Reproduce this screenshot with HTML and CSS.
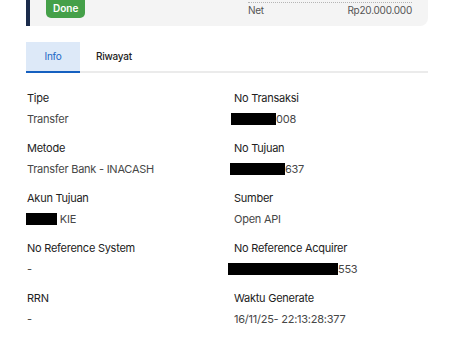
FILE: index.html
```html
<!DOCTYPE html>
<html lang="id">
<head>
    <meta charset="UTF-8">
    <meta name="viewport" content="width=device-width, initial-scale=1.0">
    <title>Detail Transaksi</title>
    <link rel="stylesheet" href="styles.css">
</head>
<body>
    <div class="page">
        <div class="summary-card">
            <span class="badge">Done</span>
            <div class="net-row">
                <span>Net</span>
                <span>Rp20.000.000</span>
            </div>
        </div>

        <div class="tabs">
            <div class="tab active">Info</div>
            <div class="tab">Riwayat</div>
        </div>

        <div class="info-grid">
            <div class="item">
                <div class="label">Tipe</div>
                <div class="value">Transfer</div>
            </div>
            <div class="item right">
                <div class="label">No Transaksi</div>
                <div class="value"><span class="mask mask-trx"></span>008</div>
            </div>
            <div class="item">
                <div class="label">Metode</div>
                <div class="value">Transfer Bank - INACASH</div>
            </div>
            <div class="item right">
                <div class="label">No Tujuan</div>
                <div class="value"><span class="mask mask-dest"></span>637</div>
            </div>
            <div class="item">
                <div class="label">Akun Tujuan</div>
                <div class="value"><span class="mask mask-acc"></span> KIE</div>
            </div>
            <div class="item right">
                <div class="label">Sumber</div>
                <div class="value">Open API</div>
            </div>
            <div class="item">
                <div class="label">No Reference System</div>
                <div class="value">-</div>
            </div>
            <div class="item right">
                <div class="label">No Reference Acquirer</div>
                <div class="value"><span class="mask mask-ref"></span>553</div>
            </div>
            <div class="item">
                <div class="label">RRN</div>
                <div class="value">-</div>
            </div>
            <div class="item right">
                <div class="label">Waktu Generate</div>
                <div class="value">16/11/25- 22:13:28:377</div>
            </div>
        </div>
    </div>
</body>
</html>
```

FILE: styles.css
```css
body {
    margin: 0;
    font-family: "Inter", "Noto Sans", sans-serif;
    background: #fff;
    color: #222;
    letter-spacing: -0.25px;
}
.page {
    padding: 0 26px;
}
.summary-card {
    display: flex;
    justify-content: space-between;
    align-items: flex-end;
    margin-top: -4px;
    padding: 0 16px 8px 16px;
    background: #f4f4f4;
    border-left: 4px solid #1b2b4b;
    border-radius: 0 0 8px 0;
}
.badge {
    display: inline-block;
    height: 22px;
    line-height: 24px;
    padding: 0 7px;
    border-radius: 5px;
    background: #45a049;
    color: #fff;
    font-size: 10px;
    font-weight: 600;
    letter-spacing: 0;
}
.net-row {
    display: flex;
    justify-content: space-between;
    width: 164px;
    border-top: 1px dotted #b5b5b5;
    padding: 1px 0 2px;
    line-height: 12px;
    font-size: 10px;
    color: #555;
}
.tabs {
    display: flex;
    margin-top: 16px;
    border-bottom: 2px solid #ebebeb;
}
.tab {
    height: 29px;
    line-height: 29px;
    padding: 0 16px;
    font-size: 10px;
    font-weight: 500;
    color: #222;
    margin-bottom: -2px;
    border-bottom: 2px solid transparent;
}
.tab.active {
    width: 54px;
    padding: 0;
    text-align: center;
    background: #dde9f8;
    color: #2168c6;
    font-weight: 400;
    border-bottom-color: #1560c0;
}
.info-grid {
    display: grid;
    grid-template-columns: 207px 1fr;
    row-gap: 15px;
    padding-top: 18px;
    padding-left: 1px;
}
.label {
    font-size: 11px;
    line-height: 14px;
    color: #222;
}
.value {
    margin-top: 7px;
    font-size: 11px;
    line-height: 14px;
    color: #474747;
}
.mask {
    display: inline-block;
    height: 12px;
    vertical-align: -2px;
    background: #000;
}
.mask-trx {
    width: 45px;
    margin-left: -3px;
}
.mask-dest {
    width: 55px;
    margin-left: -4px;
}
.mask-acc {
    width: 31px;
    margin-left: -1px;
}
.mask-ref {
    width: 110px;
    margin-left: -6px;
}
```
